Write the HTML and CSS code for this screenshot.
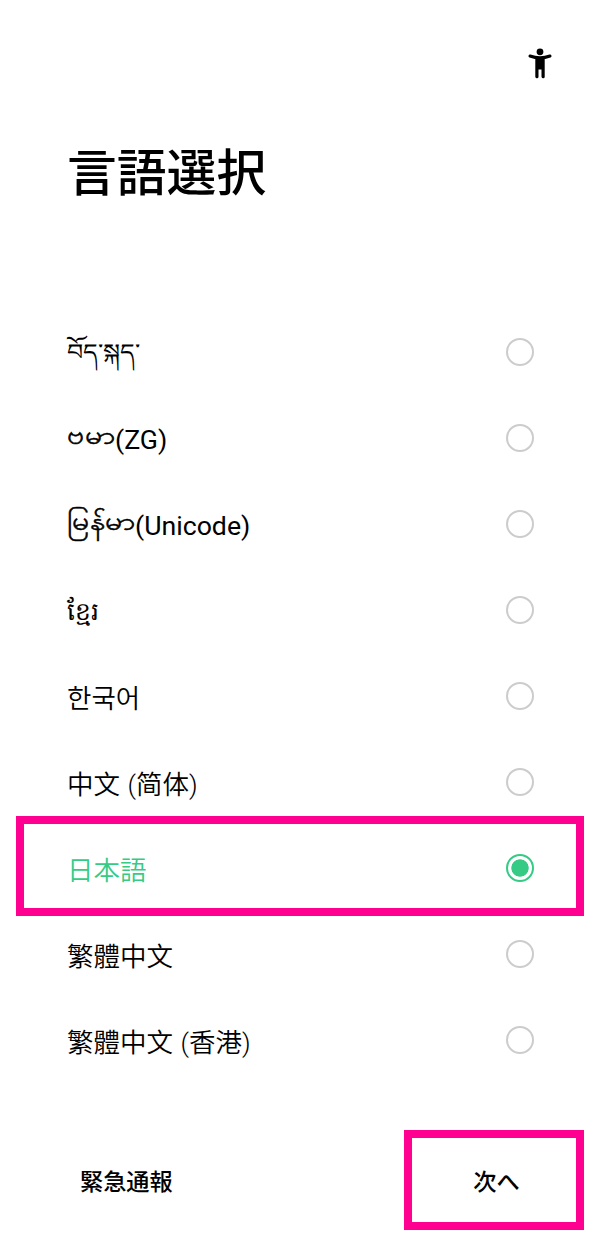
FILE: index.html
```
<!DOCTYPE html>
<html lang="ja">
  <head>
    <meta charset="utf-8">
    <title>言語選択</title>
    <link rel="stylesheet" href="styles.css">
  </head>
  <body>
    <header class="header">
      <svg class="accessibility" width="24" height="32" viewBox="0 0 24 32">
        <circle cx="12" cy="3.8" r="3.4" />
        <path d="M2 8Q12 11.7 22 8" />
        <path class="figure" d="M7.3 9.5H16.7V28.8Q16.7 30.3 15.2 30.3T13.5 28.8V21.5H10.5V28.8Q10.5 30.3 9 30.3T7.3 28.8Z" />
      </svg>
      <h1>言語選択</h1>
    </header>
    <form class="languages">
      <label class="language"><span class="tibetan" lang="bo">བོད་སྐད་</span><input type="radio" name="language"></label>
      <label class="language"><span class="myanmar" lang="my"><span class="burmese">ဗမာ</span>(ZG)</span><input type="radio" name="language"></label>
      <label class="language"><span class="myanmar" lang="my"><span class="burmese">မြန်မာ</span>(Unicode)</span><input type="radio" name="language"></label>
      <label class="language"><span class="khmer" lang="km">ខ្មែរ</span><input type="radio" name="language"></label>
      <label class="language"><span class="korean" lang="ko">한국어</span><input type="radio" name="language"></label>
      <label class="language"><span lang="zh-CN">中文 (简体)</span><input type="radio" name="language"></label>
      <label class="language selected"><span>日本語</span><input type="radio" name="language" checked></label>
      <label class="language"><span lang="zh-TW">繁體中文</span><input type="radio" name="language"></label>
      <label class="language"><span lang="zh-TW">繁體中文 (香港)</span><input type="radio" name="language"></label>
    </form>
    <footer class="footer">
      <button class="emergency">緊急通報</button>
      <button class="next">次へ</button>
    </footer>
  </body>
</html>
```
FILE: styles.css
```
* {
  box-sizing: border-box;
}

body {
  margin: 0;
  height: 1248px;
  background: #fff;
  color: #000;
  font-family: Roboto, "Noto Sans CJK JP", sans-serif;
  overflow: hidden;
}

.header {
  height: 309px;
  padding: 48px 48px 0 67px;
}

.accessibility {
  display: block;
  margin-left: auto;
}

.accessibility path {
  fill: none;
  stroke: #000;
  stroke-width: 3;
  stroke-linecap: round;
}

.accessibility .figure {
  fill: #000;
  stroke: none;
}

h1 {
  margin: 58px 0 0;
  font-size: 49.8px;
  line-height: 72px;
  font-weight: 500;
}

.languages {
  height: 775px;
  padding: 0 16px;
}

.language {
  display: flex;
  align-items: center;
  justify-content: space-between;
  height: 86.1px;
  padding: 0 50px 0 51px;
  font-size: 26.5px;
  line-height: 40px;
  word-spacing: 1px;
}

.language > span {
  padding-top: 4px;
  font-weight: 350;
}

.language input {
  appearance: none;
  width: 28px;
  height: 28px;
  margin: 0 0 1px;
  border: 2px solid #ccc;
  border-radius: 50%;
}

.language.selected {
  height: 100px;
  margin: -10px 0 -3.9px;
  padding: 5px 42px 0 43px;
  border: 8px solid #ff0090;
  color: #35cb85;
}

.selected > span {
  padding-top: 5px;
}

.selected input {
  border-color: #35cb85;
  background: radial-gradient(circle, #35cb85 8.3px, #fff 9px);
}

.language > .tibetan {
  padding-top: 2px;
  font-size: 25.3px;
  transform: scaleY(0.9);
}

.language > .myanmar {
  padding-top: 4px;
  font-size: 26.7px;
  font-weight: 400;
}

.burmese {
  display: inline-block;
  font-size: 30px;
  line-height: 30px;
  transform: translateY(-3px) scaleY(0.84);
  -webkit-text-stroke: 0.6px;
}

.language > .khmer {
  font-size: 25px;
}

.language > .korean {
  padding-top: 1px;
  font-family: "Noto Sans CJK KR", sans-serif;
}

[lang="zh-CN"] {
  font-family: Roboto, "Noto Sans CJK SC", sans-serif;
}

[lang="zh-TW"] {
  font-family: Roboto, "Noto Sans CJK TC", sans-serif;
}

.footer {
  display: flex;
  justify-content: space-between;
  align-items: center;
  height: 100px;
  margin-top: 46px;
  padding: 0 16px;
}

button {
  height: 100px;
  border: 0;
  background: none;
  color: #000;
  font: 500 23.2px "Noto Sans CJK JP", sans-serif;
}

.emergency {
  padding: 0 64px;
}

.next {
  width: 180px;
  padding: 0 0 0 5px;
  border: 8px solid #ff0090;
}
```
